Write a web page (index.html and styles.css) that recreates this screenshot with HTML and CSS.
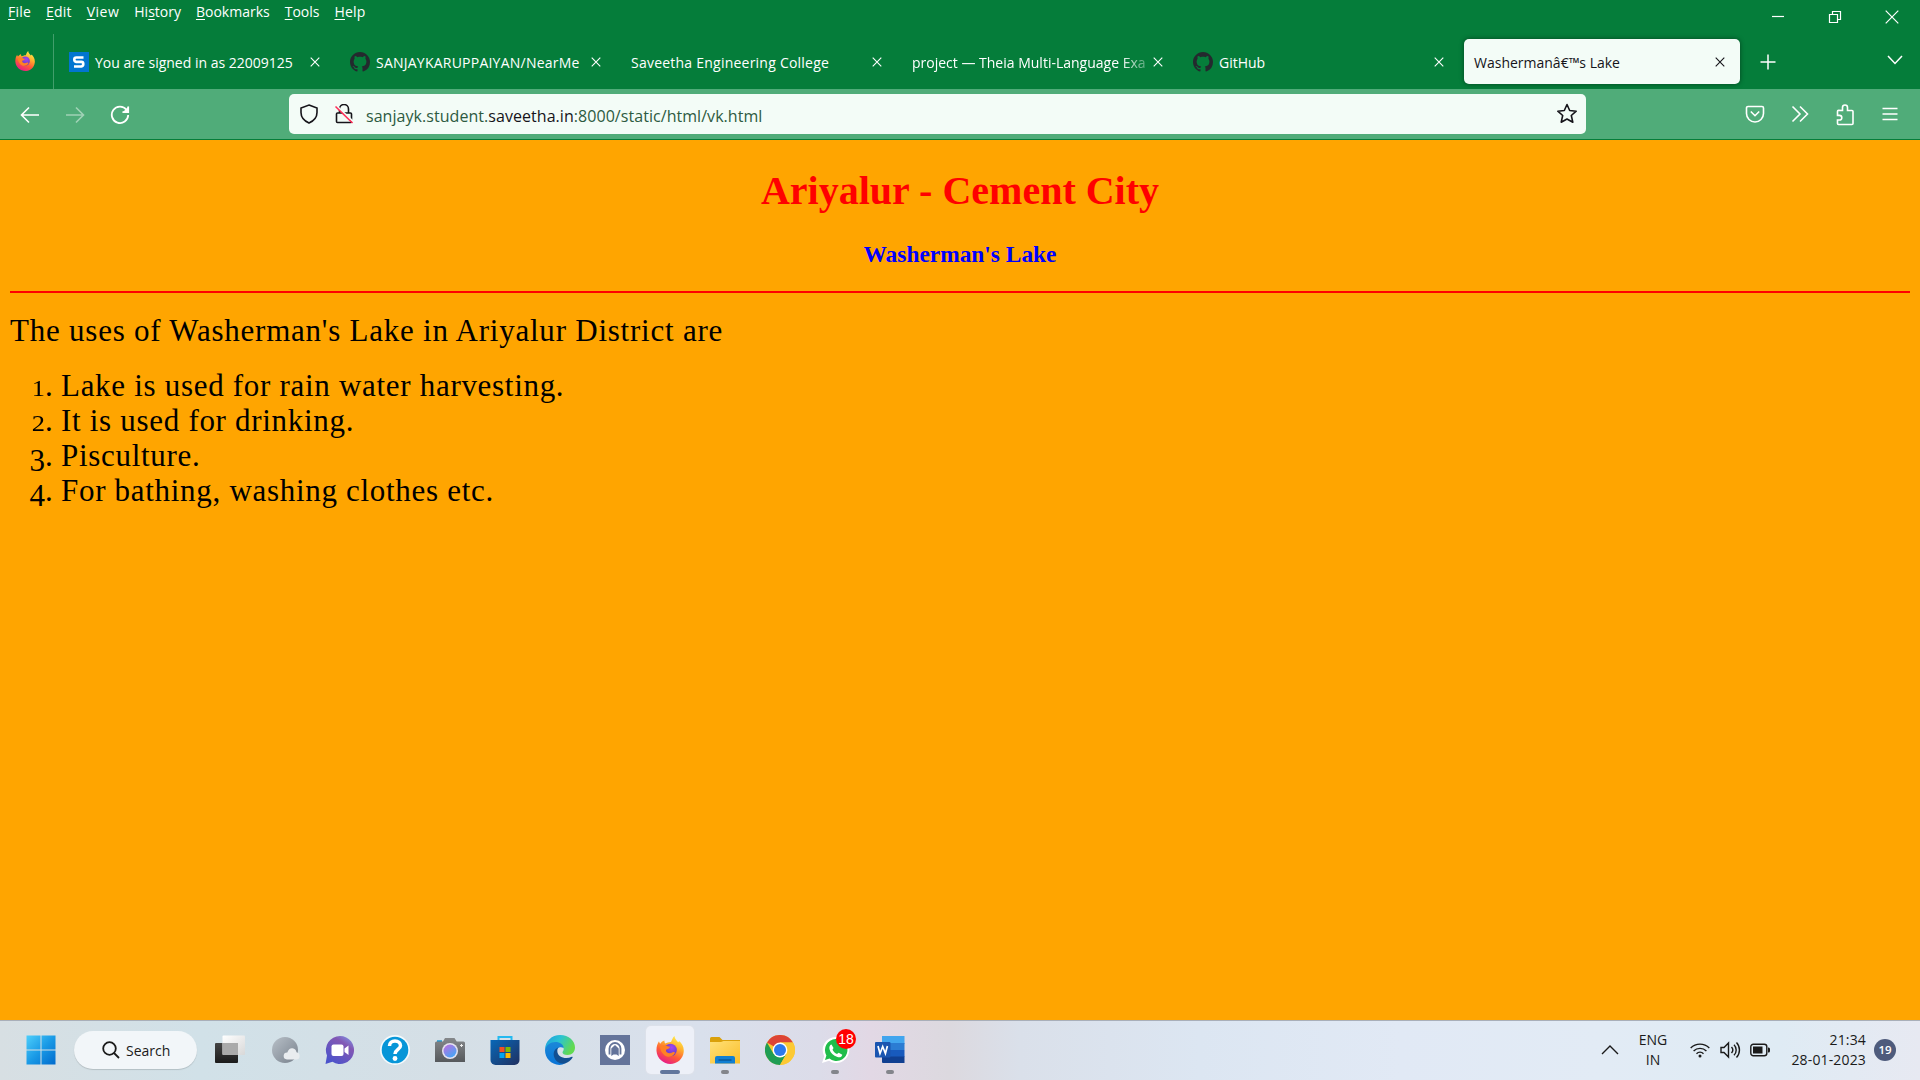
FILE: index.html
```html
<!DOCTYPE html>
<html lang="en">
<head>
<meta charset="utf-8">
<title>Washerman's Lake</title>
<link rel="stylesheet" href="styles.css">
</head>
<body>
<svg class="defs" width="0" height="0" aria-hidden="true">
  <defs>
    <linearGradient id="fxBody" x1=".8" y1="0" x2=".3" y2="1"><stop offset="0" stop-color="#fff44f"/><stop offset=".35" stop-color="#ffb02e"/><stop offset=".65" stop-color="#ff5a36"/><stop offset="1" stop-color="#e5178f"/></linearGradient>
    <radialGradient id="fxGlobe" cx=".6" cy=".3" r=".7"><stop offset="0" stop-color="#a646f0"/><stop offset="1" stop-color="#5b3cc4"/></radialGradient>
    <linearGradient id="win" gradientUnits="userSpaceOnUse" x1="0" y1="0" x2="30" y2="30"><stop offset="0" stop-color="#4fd0fb"/><stop offset=".5" stop-color="#1a9ae6"/><stop offset="1" stop-color="#0069cc"/></linearGradient>
    <linearGradient id="dark" x1="0" y1="0" x2="0" y2="1"><stop offset="0" stop-color="#444"/><stop offset="1" stop-color="#1b1b1b"/></linearGradient>
    <linearGradient id="light" x1="0" y1="0" x2="1" y2="1"><stop offset="0" stop-color="#fff"/><stop offset="1" stop-color="#d8d8d8"/></linearGradient>
    <linearGradient id="moon" x1="0" y1="0" x2="1" y2="1"><stop offset="0" stop-color="#b8c0c8"/><stop offset="1" stop-color="#78818c"/></linearGradient>
    <linearGradient id="chat" x1="1" y1="0" x2=".3" y2="1"><stop offset="0" stop-color="#7fa0ee"/><stop offset=".35" stop-color="#8257b4"/><stop offset="1" stop-color="#4b53cb"/></linearGradient>
    <linearGradient id="cam" x1="0" y1="0" x2="0" y2="1"><stop offset="0" stop-color="#85888b"/><stop offset="1" stop-color="#56595c"/></linearGradient>
    <linearGradient id="lens" x1="0" y1="0" x2=".7" y2="1"><stop offset="0" stop-color="#c46be0"/><stop offset="1" stop-color="#45a6f5"/></linearGradient>
    <linearGradient id="store" x1="0" y1="0" x2="1" y2="1"><stop offset="0" stop-color="#0868b8"/><stop offset="1" stop-color="#203060"/></linearGradient>
    <linearGradient id="edgeTop" x1="0" y1="0" x2="1" y2=".4"><stop offset="0" stop-color="#1c9be0"/><stop offset=".5" stop-color="#2bc3d2"/><stop offset="1" stop-color="#62da50"/></linearGradient>
    <linearGradient id="edgeLeft" x1="0" y1="0" x2="0" y2="1"><stop offset="0" stop-color="#1b88d8"/><stop offset="1" stop-color="#0873d6"/></linearGradient>
    <linearGradient id="folder" x1="0" y1="0" x2="1" y2="1"><stop offset="0" stop-color="#ffe078"/><stop offset="1" stop-color="#fbbf2a"/></linearGradient>
    <symbol id="firefox" viewBox="0 0 28 28">
      <path d="M.5 15C.3 10.500 1.500 7.500 3 5.300c.2 1 .5 1.800 1.200 2.400C5.200 6.300 6.500 5 8.500 4.500c-.3 1.200.1 2.200.8 3C11 7 13 5.800 15 6c1-1.800 1.500-4.500 3.500-6 .2 3 2.200 4.500 3.700 6.300.5-.3.800-.8.8-1.300C26 7.500 28.200 11 27.700 16c-.6 7-6.700 12-13.400 12S1 22.500.5 15z" fill="url(#fxBody)"/>
      <circle cx="14.500" cy="14" r="6.300" fill="url(#fxGlobe)"/>
      <path d="M4 10.500c2.500-1.500 5-1.600 7-.5 1 .6 2 .7 3 .7-.4 2-2.500 2.300-4 3-.6 3 3.500 4.300 6.200 2.800 1.300-.8 2.500-.5 2.800.3-1.400 3-4.700 4.500-8 3.700C7.500 19.500 4 15 4 10.500z" fill="#ff8124"/>
    </symbol>
    <symbol id="github" viewBox="0 0 16 16"><path d="M8 0C3.580 0 0 3.580 0 8c0 3.540 2.290 6.530 5.470 7.590.4.070.55-.17.55-.38 0-.19-.01-.82-.01-1.490-2.010.37-2.530-.49-2.690-.94-.09-.23-.48-.94-.82-1.130-.28-.15-.68-.52-.01-.53.63-.01 1.080.58 1.230.82.72 1.210 1.870.87 2.330.66.070-.52.28-.87.51-1.070-1.780-.2-3.640-.89-3.640-3.950 0-.87.31-1.590.82-2.150-.08-.2-.36-1.020.08-2.120 0 0 .67-.21 2.200.82.64-.18 1.320-.27 2-.27s1.360.09 2 .27c1.530-1.040 2.200-.82 2.200-.82.44 1.100.16 1.920.08 2.120.51.56.82 1.270.82 2.150 0 3.070-1.870 3.750-3.650 3.950.29.25.54.73.54 1.480 0 1.070-.01 1.930-.01 2.200 0 .21.15.46.55.38A8.010 8.010 0 0 0 16 8c0-4.420-3.580-8-8-8z" fill="#24292e"/></symbol>
    <symbol id="cross" viewBox="0 0 10 10"><path d="M.7.7l8.600 8.600M9.300.7L.7 9.300" fill="none" stroke="currentColor" stroke-width="1.100"/></symbol>
  </defs>
</svg>

<header class="titlebar">
  <nav class="menu">
    <span class="wide1"><u>F</u>ile</span><span class="wide1"><u>E</u>dit</span><span class="wide2"><u>V</u>iew</span><span>Hi<u>s</u>tory</span><span><u>B</u>ookmarks</span><span><u>T</u>ools</span><span class="wide1"><u>H</u>elp</span>
  </nav>
  <div class="window-buttons">
    <svg width="14" height="14" viewBox="0 0 14 14"><path d="M1 6.500h12"/></svg>
    <svg width="14" height="14" viewBox="0 0 14 14"><path d="M1.500 4.500h8v8h-8zM4.500 4.500v-3h8v8h-3"/></svg>
    <svg width="14" height="14" viewBox="0 0 14 14"><path d="M.7.7l12.600 12.600M13.300.7L.7 13.300"/></svg>
  </div>
</header>

<div class="tabstrip">
  <div class="pinned"><svg width="20" height="20"><use href="#firefox"/></svg></div>
  <div class="tab"><svg class="favicon" width="20" height="20" viewBox="0 0 20 20"><path d="M0 0h20v20H0z" fill="#0275d0"/><path d="M14.500 5.500H7.300Q5.300 5.500 5.300 7.500T7.300 9.900h5Q14.300 9.900 14.300 12T12.300 14.500H5" fill="none" stroke="#fff" stroke-width="2.600"/></svg><span class="label">You are signed in as 22009125</span><svg class="close"><use href="#cross"/></svg></div>
  <div class="tab"><svg class="favicon" width="20" height="20"><use href="#github"/></svg><span class="label loose">SANJAYKARUPPAIYAN/NearMe</span><svg class="close"><use href="#cross"/></svg></div>
  <div class="tab"><span class="label loose">Saveetha Engineering College</span><svg class="close"><use href="#cross"/></svg></div>
  <div class="tab"><span class="label fade">project — Theia Multi-Language Exa</span><svg class="close"><use href="#cross"/></svg></div>
  <div class="tab"><svg class="favicon" width="20" height="20"><use href="#github"/></svg><span class="label">GitHub</span><svg class="close"><use href="#cross"/></svg></div>
  <div class="tab active"><span class="label">Washermanâ€™s Lake</span><svg class="close"><use href="#cross"/></svg></div>
  <svg class="new-tab" width="16" height="16" viewBox="0 0 16 16"><path d="M8 .5v15M.5 8h15"/></svg>
  <svg class="all-tabs" width="16" height="16" viewBox="0 0 16 16"><path d="M1 4l7 7.500L15 4"/></svg>
</div>

<div class="toolbar">
  <div class="nav">
    <svg width="20" height="20" viewBox="0 0 20 20"><path d="M19 10H1.500M9 2.500L1.500 10 9 17.500"/></svg>
    <svg class="off" width="20" height="20" viewBox="0 0 20 20"><path d="M1 10h17.500M11 2.500l7.500 7.500-7.500 7.500"/></svg>
    <svg width="20" height="20" viewBox="0 0 20 20"><path d="M16.500 4.800A8.200 8.200 0 1 0 18.200 10M18.200 1.500v5.700h-5.700" stroke-width="1.800"/><path d="M18.500 1.500v6h-6z" fill="#fff" stroke="none"/></svg>
  </div>
  <div class="urlbar">
    <svg width="20" height="20" viewBox="0 0 20 20"><path d="M10 1L18 4v4.500c0 5-3.500 8.500-8 10.500-4.500-2-8-5.500-8-10.500V4z"/></svg>
    <svg width="20" height="20" viewBox="0 0 20 20"><path d="M5.500 8.500V5a4.500 4.500 0 0 1 9 0v3.500M3.500 9h13a1 1 0 0 1 1 1v7.500a1 1 0 0 1-1 1h-13a1 1 0 0 1-1-1V10a1 1 0 0 1 1-1z"/><path d="M2.500 2l17 16" stroke="#f3fcf7" stroke-width="2"/><path d="M1.500 2.500l17 16.500" stroke="#ff2b56" stroke-width="1.600"/></svg>
    <span class="url">sanjayk.student.<b>saveetha.in</b>:8000/static/html/vk.html</span>
    <svg width="22" height="22" viewBox="0 0 22 22"><path d="M11 1.500l2.700 6 6.500.7-4.900 4.300 1.500 6.700L11 16l-5.800 3.200 1.500-6.700L1.800 8.200l6.500-.7z" stroke-linejoin="round"/></svg>
  </div>
  <div class="tools">
    <svg width="20" height="20" viewBox="0 0 20 20"><path d="M3 2.500h14a1.500 1.500 0 0 1 1.500 1.500v5.500a8.500 8.500 0 0 1-17 0V4A1.500 1.500 0 0 1 3 2.500zM5.800 7.500L10 11.700l4.200-4.200"/></svg>
    <svg width="20" height="20" viewBox="0 0 20 20"><path d="M2.500 2.500L10 10l-7.500 7.500M10 2.500l7.500 7.500-7.500 7.500"/></svg>
    <svg width="20" height="22" viewBox="0 0 20 22"><path d="M7.500 6.500V3.500a2.500 2.500 0 0 1 5 0v3H17a1 1 0 0 1 1 1v12a1 1 0 0 1-1 1H3.500a1 1 0 0 1-1-1V16h2a2.300 2.300 0 0 0 0-4.600h-2v-4a1 1 0 0 1 1-1z"/></svg>
    <svg width="20" height="20" viewBox="0 0 20 20"><path d="M2.500 4.500h15M2.500 10h15M2.500 15.500h15"/></svg>
  </div>
</div>

<main class="page">
  <h1>Ariyalur - Cement City</h1>
  <h3>Washerman's Lake</h3>
  <hr>
  <p>The uses of Washerman's Lake in Ariyalur District are</p>
  <ol>
    <li><i class="num low">1</i><i class="dot">.</i><span>Lake is used for rain water harvesting.</span></li>
    <li><i class="num low">2</i><i class="dot">.</i><span>It is used for drinking.</span></li>
    <li><i class="num drop">3</i><i class="dot">.</i><span>Pisculture.</span></li>
    <li><i class="num drop">4</i><i class="dot">.</i><span>For bathing, washing clothes etc.</span></li>
  </ol>
</main>

<footer class="taskbar">
  <div class="start"><svg width="30" height="30" viewBox="0 0 30 30"><path d="M.5.500h14v14H.5zM15.500.500h14v14h-14zM.5 15.500h14v14H.5zM15.500 15.500h14v14h-14z" fill="url(#win)"/></svg></div>
  <div class="search"><svg width="18" height="18" viewBox="0 0 18 18"><circle cx="7.500" cy="7.500" r="6.300"/><path d="M12 12l5 5"/></svg><span>Search</span></div>
  <div class="apps">
    <div class="app"><svg width="30" height="30" viewBox="0 0 30 30"><rect y="8" width="23" height="20" rx="1" fill="url(#dark)"/><rect x="7.500" y=".5" width="22.500" height="19.500" rx="1" fill="url(#light)"/><path d="M7.500 8H23v12H8.500a1 1 0 0 1-1-1z" fill="#aaa"/></svg></div>
    <div class="app"><svg width="30" height="30" viewBox="0 0 30 30"><circle cx="15" cy="15" r="13" fill="url(#moon)"/><path d="M17 24.500a3.500 3.500 0 0 1 .3-7c1-3 3-4.500 5.200-4.200 2.300.3 3.700 2 4 4a3.700 3.700 0 0 1 .5 7.200z" fill="#e9ecef"/></svg></div>
    <div class="app"><svg width="30" height="30" viewBox="0 0 30 30"><path d="M15 1a14 14 0 1 1-7.500 25.800L.5 29l1.500-8.500A14 14 0 0 1 15 1z" fill="url(#chat)"/><rect x="6.500" y="9.500" width="12" height="11.500" rx="2" fill="#fff"/><path d="M19.500 13.500l4-3v9.500l-4-3z" fill="#fff"/></svg></div>
    <div class="app"><svg width="30" height="30" viewBox="0 0 30 30"><circle cx="15" cy="15" r="15" fill="#f5fafc"/><circle cx="15" cy="15" r="13.300" fill="#0796d8"/><path d="M9.500 11c0-3 2.300-5 5.500-5s5.500 2 5.500 4.700c0 3.600-5.500 4-5.500 8.300" fill="none" stroke="#fff" stroke-width="3.500"/><circle cx="15" cy="23.500" r="2.400" fill="#fff"/></svg></div>
    <div class="app"><svg width="30" height="30" viewBox="0 0 30 30"><path d="M2 5.300h5V8H2z" fill="#1296d4"/><path d="M1.500 6.500H8L10 3h9.500l2.200 3.500h6.800A1.500 1.500 0 0 1 30 8v19H0V8a1.500 1.500 0 0 1 1.500-1.500z" fill="url(#cam)"/><circle cx="15" cy="16" r="8" fill="#e4e2f0"/><circle cx="15" cy="16" r="6.500" fill="url(#lens)"/><path d="M26.500 9v3M25 10.500h3" stroke="#eee" stroke-width="1"/></svg></div>
    <div class="app"><svg width="30" height="30" viewBox="0 0 30 30"><path d="M8.500 7V2h13v5" fill="none" stroke="#24b9f0" stroke-width="2"/><path d="M.5 5h29v20a5 5 0 0 1-5 5h-19a5 5 0 0 1-5-5z" fill="url(#store)"/><path d="M9.500 12h5v5h-5z" fill="#f25022"/><path d="M15.500 12h5v5h-5z" fill="#7fba00"/><path d="M9.500 18h5v5h-5z" fill="#00a4ef"/><path d="M15.500 18h5v5h-5z" fill="#ffb900"/></svg></div>
    <div class="app"><svg width="30" height="30" viewBox="0 0 30 30"><path d="M0 15C0 6 7 0 15 0c9 0 15 6 15 12.500 0 4.500-3 7.500-7.500 7.500-3.500 0-5-1.500-5-2.600 0-.9 1.200-1.400 1.200-3.400 0-3-3.200-5-7.200-5C5 9 1 12 0 15z" fill="url(#edgeTop)"/><path d="M0 15c1-5 5.500-8 10.500-8 4.500 0 8 2.500 8.200 6C14 11 11 14 11 18.500c0 5 4 9 9.500 9.500-2 1.300-4 2-6 2C6 29.500 0 23 0 15z" fill="url(#edgeLeft)"/><path d="M13 12.500C9.500 14 8 17.500 9 21.500c1.300 5 6 7.800 11 7 3-.8 6-3.500 7.600-6 .3-.7-.2-1-.8-.7-6 3-14.500.5-14.500-5.800 0-1.300.2-2.500.7-3.500z" fill="#124f91"/></svg></div>
    <div class="app"><svg width="30" height="30" viewBox="0 0 30 30"><path d="M0 0h30v30H0z" fill="#64749a"/><circle cx="15" cy="15" r="10" fill="#fff"/><path d="M9.500 19.500v-6a5.500 5.500 0 0 1 11 0v6" fill="none" stroke="#64749a" stroke-width="1.800"/><path d="M11.300 21v-7.500L15 10l3.700 3.500V21l-2.200-1.500h-3z" fill="#64749a"/></svg></div>
    <div class="app current"><svg width="28" height="28"><use href="#firefox"/></svg><i class="run wide"></i></div>
    <div class="app"><svg width="30" height="30" viewBox="0 0 30 30"><path d="M0 3.500A1.500 1.500 0 0 1 1.500 2h8l3 3H30v8H0z" fill="#daa00a"/><path d="M0 7h11l2.500-1H30v22.500H0z" fill="url(#folder)"/><path d="M5 28.500V23a2 2 0 0 1 2-2h16a2 2 0 0 1 2 2v5.500z" fill="#117fd2"/><path d="M8.500 25h13" stroke="#0a4f8c" stroke-width="1.200"/></svg><i class="run"></i></div>
    <div class="app"><svg width="30" height="30" viewBox="0 0 30 30"><circle cx="15" cy="15" r="15" fill="#fcc934"/><path d="M15 15L2 7.500A15 15 0 0 1 28 7.500H15z" fill="#dd4436"/><path d="M2 7.500A15 15 0 0 0 15 30l6.500-11.200L15 15 8.500 18.700z" fill="#1f9d54"/><path d="M15 7.500h13A15 15 0 0 1 15 30l6.500-11.200z" fill="#fcc934"/><circle cx="15" cy="15" r="7.400" fill="#fff"/><circle cx="15" cy="15" r="6" fill="#2d79ed"/></svg></div>
    <div class="app"><svg width="30" height="30" viewBox="0 0 30 30"><path d="M15.500 2A13 13 0 1 1 9 25.800L2 28l2.200-6.800A13 13 0 0 1 15.500 2z" fill="#fff"/><path d="M15.500 4A11 11 0 1 1 9.500 23.500L5 25l1.400-4.500A11 11 0 0 1 15.500 4z" fill="#20bd4b"/><path d="M11.500 9.500l2 3.500-1 1.800c1 2 2.300 3.200 4.500 4.200l1.700-1.200 3.600 1.900c-.3 2.200-2.600 3-4.800 2.300-4.200-1.200-7-4-8-7.800-.5-2 .2-4.300 2-4.700z" fill="#fff"/></svg><span class="count">18</span><i class="run"></i></div>
    <div class="app"><svg width="30" height="30" viewBox="0 0 30 30"><path d="M7 1h22.500v8H7z" fill="#41a5ee"/><path d="M7 8h22.500v7H7z" fill="#2b7cd3"/><path d="M7 15h22.500v7H7z" fill="#185abd"/><path d="M7 21.500h22.500V28H8a1 1 0 0 1-1-1z" fill="#103f91"/><rect y="7" width="15.500" height="15.500" rx="1" fill="#1a55b0"/><path d="M3 11l2 7.500 2.700-7 2.700 7 2-7.500" fill="none" stroke="#fff" stroke-width="1.700"/></svg><i class="run"></i></div>
  </div>
  <div class="tray">
    <svg width="18" height="10" viewBox="0 0 18 10"><path d="M1 9l8-8 8 8"/></svg>
    <div class="lang"><span>ENG</span><span>IN</span></div>
    <svg class="wifi" width="20" height="16" viewBox="0 0 20 16"><path d="M.7 6a13.200 13.200 0 0 1 18.600 0M3.600 9a9 9 0 0 1 12.800 0M6.500 11.700a5 5 0 0 1 7 0"/><circle cx="10" cy="14" r="1.500" fill="#1a1a1a" stroke="none"/></svg>
    <svg class="sound" width="21" height="18" viewBox="0 0 21 18"><path d="M1 6.500h3L8.500 2v14L4 11.500H1zM11.500 6a4.500 4.500 0 0 1 0 6M14 3.700a7.500 7.500 0 0 1 0 10.600M16.500 1.500a11 11 0 0 1 0 15"/></svg>
    <svg class="battery" width="20" height="14" viewBox="0 0 20 14"><rect x=".8" y="1.300" width="16" height="11.400" rx="2.500"/><path d="M3 3.500h9.500v7H3z" fill="#1a1a1a" stroke="none"/><path d="M18 4.500h.5A1.500 1.500 0 0 1 20 6v2a1.500 1.500 0 0 1-1.500 1.500H18z" fill="#1a1a1a" stroke="none"/></svg>
    <div class="clock"><span>21:34</span><span>28-01-2023</span></div>
    <span class="notify">19</span>
  </div>
</footer>
</body>
</html>
```
FILE: styles.css
```css
* { box-sizing: border-box; }
body {
  margin: 0;
  width: 1920px;
  height: 1080px;
  overflow: hidden;
  display: flex;
  flex-direction: column;
  font-family: "Open Sans", "Noto Sans", sans-serif;
  font-size: 14px;
  color: #1a1a1a;
}
svg { flex: none; display: block; }
.defs { position: absolute; }

.titlebar {
  height: 34px;
  display: flex;
  justify-content: space-between;
  background: #057d3a;
  color: #fff;
}
.menu { display: flex; gap: 15px; padding-left: 8px; line-height: 24px; }
.menu u { text-underline-offset: 2px; text-decoration-thickness: 1px; }
.wide1 { letter-spacing: .2px; }
.wide2 { letter-spacing: .5px; }
.window-buttons { display: flex; gap: 43px; padding: 10px 21px 0 0; }
.window-buttons svg { fill: none; stroke: #fff; stroke-width: 1.200; }

.tabstrip {
  height: 55px;
  display: flex;
  background: #057d3a;
  color: #fff;
}
.pinned {
  width: 54px;
  border-right: 1px solid #429e6b;
  padding: 17px 0 0 15px;
}
.tab {
  width: 276px;
  height: 45px;
  margin: 5px 0 0 5px;
  padding: 0 15px 0 10px;
  display: flex;
  align-items: center;
}
.favicon { margin-right: 6px; }
.label { flex: 1; min-width: 0; white-space: nowrap; line-height: 22px; padding-top: 2px; }
.label.loose { letter-spacing: .23px; }
.fade { -webkit-mask-image: linear-gradient(to right, #000 208px, transparent 246px); mask-image: linear-gradient(to right, #000 208px, transparent 246px); }
.close { width: 10px; height: 10px; }
.tab.active { background: #f3fcf7; color: #15141a; border-radius: 5px; box-shadow: 0 0 5px rgba(0, 0, 0, .45); }
.new-tab, .all-tabs { fill: none; stroke: #fff; stroke-width: 1.500; margin-top: 20px; }
.new-tab { margin-left: 20px; }
.all-tabs { margin: 18px 17px 0 auto; }

.toolbar {
  height: 51px;
  display: flex;
  background: #50ac79;
  border-bottom: 1px solid #057d3a;
}
.nav, .tools { display: flex; fill: none; stroke: #fff; stroke-width: 1.600; }
.nav { width: 289px; gap: 25px; padding: 16px 0 0 20px; }
.off { opacity: .45; }
.urlbar {
  width: 1297px;
  height: 40px;
  margin-top: 5px;
  padding: 0 8px 0 10px;
  display: flex;
  align-items: center;
  background: #f3fcf7;
  border-radius: 5px;
  fill: none;
  stroke: #15141a;
  stroke-width: 1.600;
}
.urlbar svg + svg { margin-left: 15px; }
.url { flex: 1; margin-left: 12px; padding-top: 3px; font-size: 16px; letter-spacing: .05px; color: #2d5a41; }
.url b { font-weight: 400; color: #15141a; }
.tools { margin-left: auto; gap: 25px; padding: 15px 20px 0 0; }

.page {
  flex: 1;
  padding: 28px 10px 0;
  background: #ffa500;
  color: #000;
  font-family: Georgia, "Liberation Serif", serif;
}
h1, h3 { font-family: "Liberation Serif", serif; text-align: center; }
h1 { margin: 0; font-size: 40px; line-height: 46px; color: red; }
h3 { margin: 26px 0 0; font-size: 23.400px; line-height: 28px; color: #00f; }
hr { height: 2px; margin: 23px 0 0; border: 0; background: red; }
.page p { margin: 20px 0 0; font-size: 31px; line-height: 35px; letter-spacing: .77px; }
ol { margin: 20px 0 0; padding: 0; list-style: none; font-size: 31px; line-height: 35px; }
li { display: flex; align-items: baseline; height: 35px; }
li span { letter-spacing: .7px; }
li i { font-style: normal; }
.num { width: 34px; margin-left: 1px; text-align: right; }
.num.low { font-size: 23px; transform: scaleX(1.150); transform-origin: right; }
.num.drop { position: relative; top: 5px; }
.dot { width: 16px; }

.taskbar {
  height: 60px;
  display: flex;
  align-items: center;
  padding-bottom: 1px;
  border-top: 1px solid #a9afb9;
  background: linear-gradient(90deg, #d7dfe3 0, #d1e1e8 200px, #d5dfe6 450px, #d9e0ec 700px, #dcdce9 820px, #e2d8e5 870px, #dcd9df 950px, #dae0ea 1020px, #dce6f2 1200px, #e1e9f5 1400px, #e2ebf5 1600px, #dfebf4 1780px, #e7e9f2 1920px);
}
.start { width: 74px; padding-left: 26px; }
.search {
  width: 123px;
  height: 38px;
  display: flex;
  align-items: center;
  padding-left: 28px;
  gap: 6px;
  border-radius: 19px;
  background: #f2f6f9;
  box-shadow: 0 1px 1px rgba(0, 0, 0, .15);
  fill: none;
  stroke: #1a1a1a;
  stroke-width: 1.800;
}
.apps { display: flex; gap: 7px; margin-left: 9px; }
.app {
  position: relative;
  width: 48px;
  height: 48px;
  display: grid;
  place-items: center;
  border-radius: 5px;
}
.current { background: #edf0f8; box-shadow: 0 0 1px 1px #dde1ea; }
.run { position: absolute; left: 20px; bottom: 0; width: 8px; height: 4px; border-radius: 2px; background: #83858b; }
.run.wide { left: 14px; width: 20px; background: #62769c; }
.count {
  position: absolute;
  left: 25px;
  top: 3px;
  width: 20px;
  height: 20px;
  border-radius: 50%;
  background: #f00;
  color: #fff;
  font: 14px/20px "Liberation Sans", sans-serif;
  text-align: center;
}
.tray { display: flex; align-items: center; margin-left: auto; padding-right: 24px; fill: none; stroke: #1a1a1a; stroke-width: 1.400; }
.lang, .clock { display: flex; flex-direction: column; line-height: 20px; }
.lang { width: 32px; margin-left: 18px; align-items: center; }
.wifi { margin-left: 21px; }
.sound { margin-left: 10px; }
.battery { margin-left: 9px; }
.clock { width: 96px; align-items: flex-end; letter-spacing: .15px; }
.notify {
  width: 22px;
  height: 22px;
  margin-left: 8px;
  border-radius: 50%;
  background: #4e5b7c;
  color: #fff;
  font-size: 11.500px;
  font-weight: 600;
  line-height: 21px;
  text-align: center;
}
```
